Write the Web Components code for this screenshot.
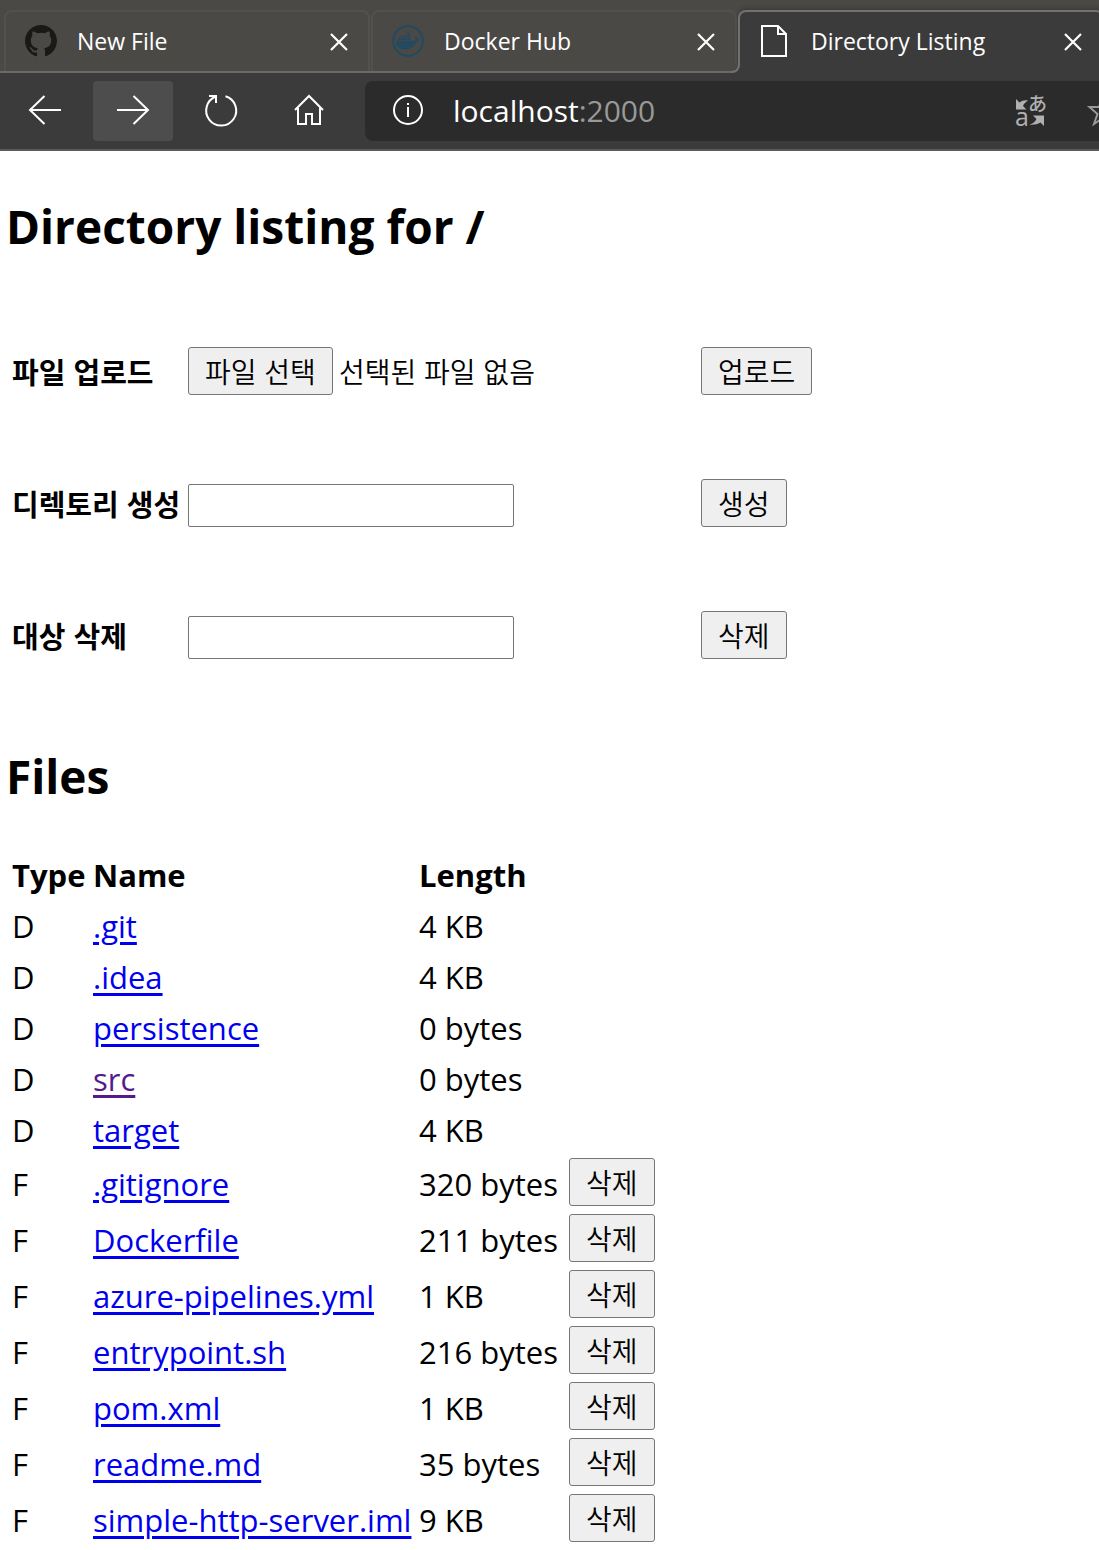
<!DOCTYPE html>
<html lang="ko">
<head>
<meta charset="utf-8">
<title>Directory Listing</title>
<style>
  body { margin: 0; background: #fff; color: #000; font-family: "Open Sans", "Noto Sans CJK KR", sans-serif; }
</style>
</head>
<body>
<browser-window>
  <browser-tab slot="tab" label="New File"><app-icon name="github"></app-icon></browser-tab>
  <browser-tab slot="tab" label="Docker Hub"><app-icon name="docker"></app-icon></browser-tab>
  <browser-tab slot="tab" label="Directory Listing" active><app-icon name="page"></app-icon></browser-tab>
  <browser-toolbar slot="toolbar" host="localhost" port=":2000"></browser-toolbar>
  <directory-page>
    <action-form slot="actions" label="파일 업로드" action="업로드" kind="file"></action-form>
    <action-form slot="actions" label="디렉토리 생성" action="생성"></action-form>
    <action-form slot="actions" label="대상 삭제" action="삭제"></action-form>
    <file-table slot="files"></file-table>
  </directory-page>
</browser-window>
<script>
const ICONS = {
  github: `<svg width="32" height="32" viewBox="0 0 16 16"><path fill="#1b1918" d="M8 0C3.58 0 0 3.58 0 8c0 3.54 2.29 6.53 5.47 7.59.4.07.55-.17.55-.38 0-.19-.01-.82-.01-1.49-2.01.37-2.53-.49-2.69-.94-.09-.23-.48-.94-.82-1.13-.28-.15-.68-.52-.01-.53.63-.01 1.08.58 1.23.82.72 1.21 1.87.87 2.33.66.07-.52.28-.87.51-1.07-1.78-.2-3.64-.89-3.64-3.95 0-.87.31-1.59.82-2.15-.08-.2-.36-1.02.08-2.12 0 0 .67-.21 2.2.82.64-.18 1.32-.27 2-.27s1.36.09 2 .27c1.53-1.04 2.2-.82 2.2-.82.44 1.1.16 1.92.08 2.12.51.56.82 1.27.82 2.15 0 3.07-1.87 3.75-3.65 3.95.29.25.54.73.54 1.48 0 1.07-.01 1.93-.01 2.2 0 .21.15.46.55.38A8.01 8.01 0 0 0 16 8c0-4.42-3.58-8-8-8z"/></svg>`,
  docker: `<svg width="32" height="32" viewBox="0 0 32 32"><circle cx="16" cy="16" r="14.8" fill="none" stroke="#234a61" stroke-width="2.2"/><path fill="#234a61" d="M4 15.800h18c1.200 0 1.700-.5 1.600-1.500-.5-1-.4-2 .3-3 1 .6 1.500 1.500 1.600 2.500 1-.2 1.900 0 2.600.5-.6 1.200-1.700 1.800-3.200 1.800C22.800 21.400 18.600 24.500 12.800 24.500 7.200 24.500 4 21.200 4 15.800zM6 12.600h2.700v2.500H6zM9.200 12.600h2.700v2.500H9.200zM12.400 12.600h2.700v2.500h-2.700zM15.600 12.600h2.700v2.500h-2.700zM9.200 10.400h2.700V12H9.200zM12.400 10.400h2.700V12h-2.700zM15.600 7.500h2.400V12h-2.400z"/></svg>`,
  page: `<svg width="32" height="32" viewBox="0 0 32 32" fill="none" stroke="#fff" stroke-width="2"><path d="M3 1h16l8 8v22H3zM19 1v8h8"/></svg>`,
  close: `<svg width="18" height="18" viewBox="0 0 18 18" stroke="#fff" stroke-width="2.200"><path d="M1 1l16 16M17 1L1 17"/></svg>`,
  back: `<svg width="32" height="32" viewBox="0 0 32 32" fill="none" stroke="#fff" stroke-width="2"><path d="M32 15H1M15.500 1L1 15l14.500 14"/></svg>`,
  forward: `<svg width="32" height="32" viewBox="0 0 32 32" fill="none" stroke="#fff" stroke-width="2"><path d="M0 15h31M16.500 1L31 15 16.500 29"/></svg>`,
  reload: `<svg width="34" height="34" viewBox="0 0 34 34" fill="none" stroke="#fff" stroke-width="2"><path d="M21.500 2.200A15 15 0 1 1 12 2.500M5 2h7v7"/></svg>`,
  home: `<svg width="30" height="34" viewBox="0 0 30 34" fill="none" stroke="#fff" stroke-width="2"><path d="M1 16L15 2l14 14M4 14v16h8V20h6v10h8V14"/></svg>`,
  info: `<svg width="32" height="34" viewBox="0 0 32 34"><circle cx="16" cy="16" r="14" fill="none" stroke="#fff" stroke-width="2"/><path fill="#fff" d="M15 9h2v2h-2zM15 13h2v10h-2z"/></svg>`,
  translate: `<svg width="32" height="34" viewBox="0 0 32 34" fill="#b0b0b0"><path d="M1 5l3.500 3.500C7 6.500 10 6 13 6.500 10.500 8 9 9.500 8 12l3.500 3.500H1zM29 32l-3.500-3.500C22 30.500 18 31 14.500 30.500 18 29.500 20 28 21.500 25L18 21.500h11z"/><text x="0" y="32" font-size="25" font-family="Open Sans, sans-serif">a</text><text x="13" y="17" font-size="19" font-weight="500" font-family="Noto Sans CJK JP, sans-serif">あ</text></svg>`,
  star: `<svg width="12" height="32" viewBox="0 0 12 32" fill="none" stroke="#999" stroke-width="2"><path d="M16 2l-4 10H2.500l8 7L7 29l9-6"/></svg>`
};

class AppIcon extends HTMLElement {
  connectedCallback() {
    this.attachShadow({ mode: 'open' }).innerHTML =
      `<style>:host{display:flex;flex:none}svg{display:block;overflow:visible}</style>${ICONS[this.getAttribute('name')]}`;
  }
}
customElements.define('app-icon', AppIcon);

class BrowserTab extends HTMLElement {
  connectedCallback() {
    const label = this.getAttribute('label');
    this.attachShadow({ mode: 'open' }).innerHTML = `
      <style>
        :host { display:flex; box-sizing:border-box; flex:1 0 366px; height:61px; align-items:center;
          padding:0 20px 2px 19px; gap:20px; position:relative; color:#fff;
          border:2px solid #53514e; border-bottom:0; border-radius:8px 8px 0 0; }
        :host([active]) { height:63px; margin-bottom:-2px; padding-bottom:4px; background:#3b3b3b; border-color:#73716f; box-shadow:0 -2px 4px #0003; clip-path:inset(-8px -8px 0 -12px); }
        :host([active])::before, :host([active])::after { content:""; position:absolute; left:-9px; bottom:0; width:9px; height:9px; box-sizing:border-box; background:#3b3b3b; }
        :host([active])::after { background:#4b4946; border:solid #73716f; border-width:0 2px 2px 0; border-radius:0 0 8px 0; }
        span { flex:1; font-size:23px; line-height:32px; white-space:nowrap; }
        button { border:0; background:none; padding:2px 0 0; display:flex; }
      </style>
      <slot></slot><span>${label}</span>
      <button type="button" aria-label="${label} 닫기"><app-icon name="close"></app-icon></button>`;
  }
}
customElements.define('browser-tab', BrowserTab);

class BrowserToolbar extends HTMLElement {
  connectedCallback() {
    this.attachShadow({ mode: 'open' }).innerHTML = `
      <style>
        :host { display:flex; gap:16px; padding:8px 0 8px 5px; background:#3b3b3b; border-bottom:2px solid #5b5959; }
        button { border:0; background:none; padding:0; display:flex; align-items:center; justify-content:center; }
        nav { display:flex; gap:8px; }
        nav button { width:80px; height:60px; border-radius:4px; }
        nav button.current { background:#4d4d4d; }
        .address { flex:1; min-width:0; display:flex; align-items:center; background:#2b2b2b;
          border-radius:8px 0 0 8px; padding-left:27px; }
        .url { flex:1; padding-left:29px; font-size:30px; line-height:40px; color:#fff; }
        .url span { color:#999; }
        .address button + button { margin-left:40px; }
      </style>
      <nav>
        <button type="button" aria-label="뒤로"><app-icon name="back"></app-icon></button>
        <button type="button" class="current" aria-label="앞으로"><app-icon name="forward"></app-icon></button>
        <button type="button" aria-label="새로 고침"><app-icon name="reload"></app-icon></button>
        <button type="button" aria-label="홈"><app-icon name="home"></app-icon></button>
      </nav>
      <div class="address">
        <app-icon name="info"></app-icon>
        <div class="url">${this.getAttribute('host')}<span>${this.getAttribute('port')}</span></div>
        <button type="button" aria-label="번역"><app-icon name="translate"></app-icon></button>
        <button type="button" aria-label="즐겨찾기"><app-icon name="star"></app-icon></button>
      </div>`;
  }
}
customElements.define('browser-toolbar', BrowserToolbar);

class BrowserWindow extends HTMLElement {
  connectedCallback() {
    this.attachShadow({ mode: 'open' }).innerHTML = `
      <style>
        :host { display:block; overflow:hidden; }
        .strip { display:flex; gap:1px; padding:10px 0 0 4px; background:#4b4946; border-bottom:2px solid #6b6968; }
      </style>
      <header><div class="strip"><slot name="tab"></slot></div><slot name="toolbar"></slot></header>
      <main><slot></slot></main>`;
  }
}
customElements.define('browser-window', BrowserWindow);

const BUTTON_CSS = `
  button { box-sizing:border-box; height:48px; padding:0 16px; border:1px solid #767676; border-radius:3px;
    background:#efefef; color:#000; font-family:"Noto Sans CJK KR", sans-serif; font-weight:350; font-size:28px; line-height:40px; white-space:nowrap; }`;

class ActionForm extends HTMLElement {
  connectedCallback() {
    const field = this.getAttribute('kind') === 'file'
      ? `<div class="file"><input id="field" type="file" hidden><button type="button" id="pick">파일 선택</button><span>선택된 파일 없음</span></div>`
      : `<input id="field" type="text">`;
    this.attachShadow({ mode: 'open' }).innerHTML = `
      <style>
        :host { display:block; }
        form { display:grid; grid-template-columns:176px 513px auto; justify-content:start; align-items:end; margin:0; }
        label { align-self:center; font-family:"Noto Sans CJK KR", sans-serif; font-weight:700; font-size:29px; line-height:48px; white-space:nowrap; }
        .cell { display:flex; }
        input[type=text] { box-sizing:border-box; width:326px; height:43px; border:1px solid #767676; border-radius:2px; padding:2px 4px; font-size:28px; font-family:inherit; }
        .file { display:flex; align-items:center; gap:6px; }
        .file span { font-family:"Noto Sans CJK KR", sans-serif; font-weight:350; font-size:28px; line-height:40px; }
        ${BUTTON_CSS}
      </style>
      <form><label for="field">${this.getAttribute('label')}</label><div class="cell">${field}</div><button type="button">${this.getAttribute('action')}</button></form>`;
    const pick = this.shadowRoot.getElementById('pick');
    if (pick) pick.addEventListener('click', () => this.shadowRoot.getElementById('field').click());
  }
}
customElements.define('action-form', ActionForm);

const FILES = [
  ['D', '.git', '4 KB'], ['D', '.idea', '4 KB'], ['D', 'persistence', '0 bytes'],
  ['D', 'src', '0 bytes', true], ['D', 'target', '4 KB'],
  ['F', '.gitignore', '320 bytes'], ['F', 'Dockerfile', '211 bytes'], ['F', 'azure-pipelines.yml', '1 KB'],
  ['F', 'entrypoint.sh', '216 bytes'], ['F', 'pom.xml', '1 KB'], ['F', 'readme.md', '35 bytes'],
  ['F', 'simple-http-server.iml', '9 KB']
];

class FileTable extends HTMLElement {
  connectedCallback() {
    const rows = FILES.map(([type, name, length, seen]) => `
      <tr class="${type}"><td>${type}</td><td><a href="#${name}"${seen ? ' class="seen"' : ''}>${name}</a></td><td>${length}</td><td>${type === 'F' ? '<button type="button">삭제</button>' : ''}</td></tr>`).join('');
    this.attachShadow({ mode: 'open' }).innerHTML = `
      <style>
        :host { display:block; }
        table { border-collapse:collapse; table-layout:fixed; width:642px; font-size:31px; line-height:40px; }
        th, td { padding:3px 0 0; text-align:left; white-space:nowrap; vertical-align:middle; }
        tr { height:51px; }
        tr.F { height:56px; }
        col:nth-child(1) { width:81px; } col:nth-child(2) { width:326px; } col:nth-child(3) { width:150px; }
        a { color:#00e; text-underline-offset:4px; text-decoration-thickness:3px; }
        a.seen { color:#551a8b; }
        td:last-child { padding:0; line-height:0; }
        ${BUTTON_CSS}
      </style>
      <table><colgroup><col><col><col><col></colgroup>
        <thead><tr><th>Type</th><th>Name</th><th>Length</th><th></th></tr></thead>
        <tbody>${rows}</tbody></table>`;
  }
}
customElements.define('file-table', FileTable);

class DirectoryPage extends HTMLElement {
  connectedCallback() {
    this.attachShadow({ mode: 'open' }).innerHTML = `
      <style>
        :host { display:block; padding:43px 12px 8px; }
        h1, h2 { margin:0 0 0 -6px; font-weight:700; font-size:46px; line-height:64px; }
        .actions { display:flex; flex-direction:column; gap:84px; padding:89px 0 85px; }
        .files { padding-top:40px; }
      </style>
      <h1>Directory listing for /</h1>
      <div class="actions"><slot name="actions"></slot></div>
      <h2>Files</h2>
      <div class="files"><slot name="files"></slot></div>`;
  }
}
customElements.define('directory-page', DirectoryPage);
</script>
</body>
</html>
